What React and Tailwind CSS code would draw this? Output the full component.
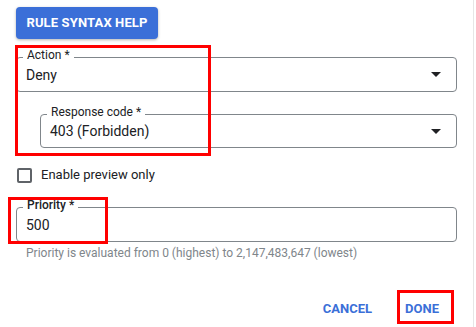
import { useState } from "react";

function Caret() {
  return (
    <svg width="10" height="5" viewBox="0 0 10 5" className="shrink-0">
      <path d="M0 0h10L5 5z" fill="#202124" />
    </svg>
  );
}

function SelectField({ label, value, className = "" }) {
  return (
    <div
      className={`relative flex items-center justify-between rounded-[4px] border border-[#80868b] pl-[9px] pr-[15px] ${className}`}
    >
      <span className="absolute -top-[10px] left-[6px] bg-white px-1 text-[12px] leading-[14px] text-[#202124]">
        {label}
      </span>
      <span className="text-[14px] leading-4 text-[#202124]">{value}</span>
      <Caret />
    </div>
  );
}

export default function App() {
  const [preview, setPreview] = useState(false);

  return (
    <div className="relative h-[327px] w-[476px] overflow-hidden bg-white font-['Roboto',sans-serif]">
      <div className="flex h-full w-[474px] flex-col border-r border-[#e6e6e6] pl-4 pr-[16px] pt-[7px]">
        <button className="flex h-8 w-[142px] items-center justify-center rounded-[4px] bg-[#3b6fd8] text-[13px] font-bold tracking-[0.01em] text-white shadow-[0_1px_3px_rgba(0,0,0,0.3)]">
          RULE SYNTAX HELP
        </button>

        <SelectField label="Action *" value="Deny" className="mt-[18px] h-[35px]" />
        <SelectField
          label="Response code *"
          value="403 (Forbidden)"
          className="ml-6 mt-[22px] h-[34px]"
        />

        <label className="mt-[19px] flex h-4 items-center gap-[9px]">
          <span
            className="ml-[1px] block h-[15px] w-[15px] rounded-[2px] border-2 border-[#5f6368]"
            onClick={() => setPreview(!preview)}
          />
          <span className="text-[13px] leading-4 text-[#202124]">Enable preview only</span>
        </label>

        <div className="relative mt-[24px] flex h-[35px] items-center rounded-[4px] border border-[#80868b] pl-[9px]">
          <span className="absolute -top-[10px] left-[6px] bg-white px-1 text-[12px] font-medium leading-[14px] text-[#202124]">
            Priority *
          </span>
          <span className="text-[14px] leading-4 text-[#202124]">500</span>
        </div>
        <p className="mt-[4px] pl-[10px] text-[12px] leading-[14px] text-[#80868b]">
          Priority is evaluated from 0 (highest) to 2,147,483,647 (lowest)
        </p>

        <div className="mt-[31px] flex justify-end gap-[17px] pr-[10px]">
          <button className="h-9 px-2 text-[13px] font-bold text-[#3b6fd8]">CANCEL</button>
          <button className="h-9 px-2 text-[13px] font-bold text-[#3b6fd8]">DONE</button>
        </div>
      </div>

      {/* annotation boxes */}
      <div className="absolute left-[15px] top-[45px] h-[111px] w-[196px] border-[3px] border-[#ff0000]" />
      <div className="absolute left-[8px] top-[197px] h-[47px] w-[100px] border-[3px] border-[#ff0000]" />
      <div className="absolute left-[397px] top-[290px] h-[34px] w-[57px] border-[3px] border-[#ff0000]" />
    </div>
  );
}
